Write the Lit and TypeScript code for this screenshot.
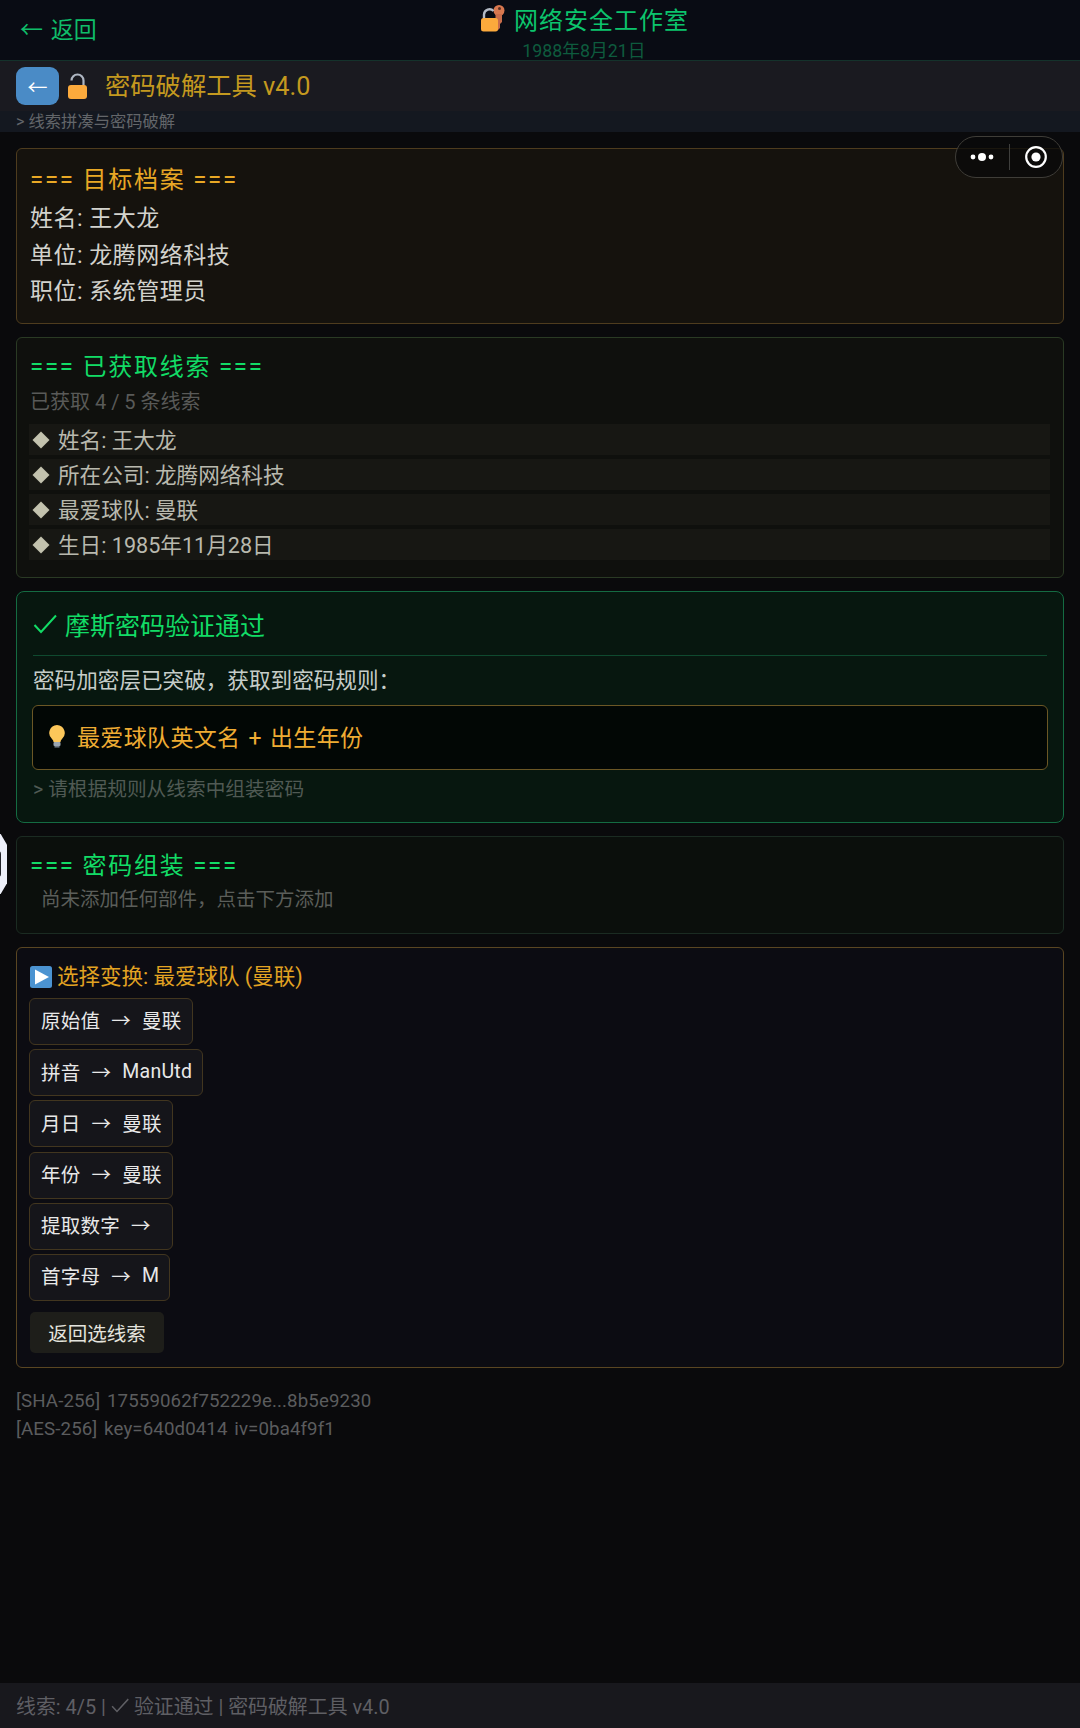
import { LitElement, html, css, svg } from "lit";
import { customElement } from "lit/decorators.js";

const clues = ["姓名: 王大龙", "所在公司: 龙腾网络科技", "最爱球队: 曼联", "生日: 1985年11月28日"];
const options: [string, string][] = [
  ["原始值", "曼联"],
  ["拼音", "ManUtd"],
  ["月日", "曼联"],
  ["年份", "曼联"],
  ["提取数字", ""],
  ["首字母", "M"],
];

const lockKey = svg`<svg width="26" height="28" viewBox="0 0 26 28">
  <circle cx="20" cy="6.500" r="5.500" fill="#d8784f"/><circle cx="20.500" cy="4.500" r="1.500" fill="#5a2f22"/>
  <path d="M16.500 10h6.500v8l-2 2v4l-2 2h-2.500z" fill="#c96d4a"/>
  <path d="M5 15V10.500a5.500 5.500 0 0 1 9.500 -3.500" fill="none" stroke="#b4bbc6" stroke-width="2.400"/>
  <rect x="2" y="14" width="17" height="13.500" rx="2.500" fill="#fcaa3c"/></svg>`;
const openLock = svg`<svg width="21" height="28" viewBox="0 0 21 28">
  <path d="M4.500 8.500a6 6 0 0 1 12 0V15" fill="none" stroke="#aeb6c2" stroke-width="2.200"/>
  <rect x="1" y="13" width="19" height="14" rx="3" fill="#fcaa3c"/></svg>`;
const bulb = svg`<svg width="18" height="24" viewBox="0 0 18 24">
  <path d="M9 1a8 8 0 0 0-5 14c1 1 1.500 2 1.500 3h7c0-1 .5-2 1.500-3A8 8 0 0 0 9 1z" fill="#fcc75a"/>
  <rect x="5.500" y="18" width="7" height="4" rx="1" fill="#9aa6b2"/><rect x="6.500" y="22" width="5" height="1.600" fill="#6c7884"/></svg>`;
const play = svg`<svg width="22" height="22" viewBox="0 0 22 22">
  <rect width="22" height="22" rx="2.500" fill="#4b93d1"/><path d="M5 3.500 19 11 5 18.500z" fill="#fff"/></svg>`;
const check = svg`<svg width="24" height="20" viewBox="0 0 24 20"><path d="M1.500 11 8 18 23 1.500" fill="none" stroke="currentColor" stroke-width="2"/></svg>`;
const checkSmall = svg`<svg width="18" height="15" viewBox="0 0 24 20"><path d="M1.500 11 8 18 23 1.500" fill="none" stroke="currentColor" stroke-width="2"/></svg>`;

@customElement("app-root")
export class AppRoot extends LitElement {
  static styles = css`
    :host {
      display: flex;
      flex-direction: column;
      position: relative;
      width: 1080px;
      height: 1728px;
      overflow: hidden;
      background: #0a0a0c;
      font-family: Roboto, "Noto Sans CJK SC", sans-serif;
      color: #c9c9c2;
    }
    .nav {
      height: 61px;
      box-sizing: border-box;
      display: flex;
      align-items: flex-start;
      background: #090c14;
      border-bottom: 1px solid #14322b;
      padding: 0 20px;
      flex: none;
    }
    .nav-back {
      width: 88px;
      flex: none;
      font-size: 23px;
      line-height: 30px;
      padding-top: 16px;
      word-spacing: 2px;
      color: #0fbd6a;
    }
    .nav-center { flex: 1; display: flex; flex-direction: column; align-items: center; }
    .nav-title {
      display: flex;
      align-items: center;
      gap: 9px;
      height: 34px;
      margin-top: 1px;
      font-size: 24px;
      letter-spacing: 1px;
      color: #0cc46d;
    }
    .nav-date { font-size: 17.800px; line-height: 24px; margin-top: 4px; color: #0e5b3e; }
    .toolbar {
      height: 50px;
      flex: none;
      display: flex;
      align-items: center;
      gap: 8px;
      padding: 0 16px;
      background: #1a1a20;
    }
    .back-btn {
      width: 43px;
      height: 38px;
      border-radius: 9px;
      background: #4a8bc6;
      color: #fff;
      font-size: 20px;
      display: flex;
      align-items: center;
      justify-content: center;
    }
    .toolbar-title { margin-left: 9px; padding-bottom: 4px; font-size: 25.300px; color: #c4991f; }
    .subbar {
      height: 21px;
      flex: none;
      padding: 0 16px;
      background: #141820;
      font-size: 16.300px;
      line-height: 21px;
      color: #63666a;
    }
    .main {
      padding: 16px 16px 0 16px;
      display: flex;
      flex-direction: column;
      gap: 13px;
    }
    .card { border: 1.500px solid #2a3a24; border-radius: 6px; box-sizing: border-box; }
    .target { height: 176px; padding: 14px 13px; background: #15120d; border-color: #4e3c1e; }
    .target .h { color: #e9a825; margin-bottom: 3px; }
    .h { font-size: 24px; line-height: 35px; letter-spacing: 1.750px; margin-bottom: 2px; }
    .green { color: #12dc66; }
    .line { font-size: 23px; line-height: 36.500px; letter-spacing: 0.500px; color: #d3d3cd; }
    .clues { height: 241px; padding: 12px 0 12px 13px; background: #0f100d; }
    .count { font-size: 20px; line-height: 31px; color: #595a58; margin-bottom: 6px; }
    .clue {
      height: 31px;
      box-sizing: border-box;
      margin-bottom: 4px;
      display: flex;
      align-items: center;
      gap: 8px;
      padding: 0 0 2px 3px;
      margin-left: -1px;
      margin-right: 13px;
      background: #171713;
      font-size: 21.600px;
      color: #b9b9ae;
    }
    .diamond { width: 12px; height: 12px; margin: 2px 3px 0; background: #c3c2ae; transform: rotate(45deg); flex: none; }
    .verify { height: 232px; padding: 0 16px; background: #07170f; border-color: #146b42; border-radius: 8px; }
    .verify-h {
      height: 64px;
      box-sizing: border-box;
      display: flex;
      align-items: center;
      gap: 8px;
      font-size: 25px;
      color: #12dc66;
      border-bottom: 1.500px solid #0f4a2f;
    }
    .verify-text { font-size: 21.600px; line-height: 30px; margin-top: 10px; color: #c6cdc9; }
    .rule {
      height: 65px;
      box-sizing: border-box;
      margin: 9px -1px 0;
      display: flex;
      align-items: center;
      gap: 11px;
      padding: 0 0 4px 15px;
      background: #020705;
      border: 1.500px solid #6b5725;
      border-radius: 6px;
      font-size: 23px;
      letter-spacing: 0.350px;
      word-spacing: 2px;
      color: #efac33;
    }
    .hint { font-size: 19.700px; line-height: 30px; margin-top: 5px; color: #505a54; }
    .assemble { height: 98px; padding: 12px 13px; background: #0b0f0c; border-color: #1b2b22; }
    .assemble .h { margin-bottom: 1px; }
    .empty { font-size: 19.500px; line-height: 30px; padding-left: 11px; margin-top: 1px; color: #5b5e5a; }
    .picker {
      height: 421px;
      padding: 14px 12px;
      background: #0c0c12;
      border-color: #5a4622;
      display: flex;
      flex-direction: column;
      align-items: flex-start;
    }
    .picker-h {
      display: flex;
      align-items: center;
      gap: 5px;
      height: 30px;
      margin-left: 1px;
      font-size: 21.500px;
      color: #e2a322;
      margin-bottom: 6px;
    }
    .picker-h span { padding-bottom: 6px; }
    .opt {
      height: 47px;
      box-sizing: border-box;
      display: flex;
      align-items: center;
      gap: 11px;
      padding: 0 10px 3px 11px;
      margin-bottom: 4.200px;
      background: #15151a;
      border: 1.500px solid #42361f;
      border-radius: 6px;
      font-size: 19.500px;
      letter-spacing: 0.250px;
      color: #e8e8e8;
      white-space: nowrap;
    }
    .return {
      margin: 7px 0 0 1px;
      height: 41px;
      width: 134px;
      display: flex;
      align-items: center;
      justify-content: center;
      background: #1e1e1a;
      border-radius: 5px;
      font-size: 19.500px;
      color: #e4e4de;
    }
    .hash { padding: 19px 16px 0; font-size: 18.700px; line-height: 28px; letter-spacing: 0.100px; word-spacing: 2px; color: #5b5c5e; }
    .footer {
      margin-top: auto;
      height: 44px;
      flex: none;
      display: flex;
      align-items: center;
      gap: 5px;
      padding: 0 16px 1px;
      background: #18181d;
      font-size: 19.900px;
      color: #5f5f64;
    }
    .capsule {
      position: absolute;
      left: 955px;
      top: 136px;
      width: 108px;
      height: 42px;
      box-sizing: border-box;
      display: flex;
      align-items: center;
      background: rgba(10, 10, 10, 0.75);
      border: 1.500px solid #3f3d38;
      border-radius: 21px;
    }
    .capsule-side { flex: 1; display: flex; justify-content: center; align-items: center; }
    .capsule-line { width: 1px; height: 26px; background: #3f3f3d; }
    .float {
      position: absolute;
      left: -14px;
      top: 834px;
      width: 21px;
      height: 60px;
      background: #eef0fa;
      clip-path: polygon(30% 0, 70% 0, 100% 18%, 100% 82%, 70% 100%, 30% 100%, 0 82%, 0 18%);
    }
    .float-in { position: absolute; left: 4px; top: 17px; width: 11px; height: 26px; box-sizing: border-box; border: 2px solid #24242a; border-radius: 3px; }
  `;

  render() {
    return html`
      <div class="nav">
        <div class="nav-back">← 返回</div>
        <div class="nav-center">
          <div class="nav-title">${lockKey}<span>网络安全工作室</span></div>
          <div class="nav-date">1988年8月21日</div>
        </div>
      </div>
      <div class="toolbar">
        <div class="back-btn">←</div>
        ${openLock}
        <div class="toolbar-title">密码破解工具 v4.0</div>
      </div>
      <div class="subbar">&gt; 线索拼凑与密码破解</div>
      <div class="main">
        <div class="card target">
          <div class="h">=== 目标档案 ===</div>
          <div class="line">姓名: 王大龙</div>
          <div class="line">单位: 龙腾网络科技</div>
          <div class="line">职位: 系统管理员</div>
        </div>
        <div class="card clues">
          <div class="h green">=== 已获取线索 ===</div>
          <div class="count">已获取 4 / 5 条线索</div>
          ${clues.map((c) => html`<div class="clue"><span class="diamond"></span><span>${c}</span></div>`)}
        </div>
        <div class="card verify">
          <div class="verify-h">${check}<span>摩斯密码验证通过</span></div>
          <div class="verify-text">密码加密层已突破，获取到密码规则：</div>
          <div class="rule">${bulb}<span>最爱球队英文名 + 出生年份</span></div>
          <div class="hint">&gt; 请根据规则从线索中组装密码</div>
        </div>
        <div class="card assemble">
          <div class="h green">=== 密码组装 ===</div>
          <div class="empty">尚未添加任何部件，点击下方添加</div>
        </div>
        <div class="card picker">
          <div class="picker-h">${play}<span>选择变换: 最爱球队 (曼联)</span></div>
          ${options.map(
            ([a, b]) => html`<div class="opt"><span>${a}</span><span>→</span><span>${b}</span></div>`
          )}
          <div class="return">返回选线索</div>
        </div>
      </div>
      <div class="hash">
        <div>[SHA-256] 17559062f752229e...8b5e9230</div>
        <div>[AES-256] key=640d0414 iv=0ba4f9f1</div>
      </div>
      <div class="footer"><span>线索: 4/5 |</span>${checkSmall}<span>验证通过 | 密码破解工具 v4.0</span></div>
      <div class="capsule">
        <div class="capsule-side">
          <svg width="24" height="10" viewBox="0 0 24 10"><circle cx="3" cy="5" r="2.400" fill="#fff"/><circle cx="12" cy="5" r="4" fill="#fff"/><circle cx="21" cy="5" r="2.400" fill="#fff"/></svg>
        </div>
        <div class="capsule-line"></div>
        <div class="capsule-side">
          <svg width="24" height="24" viewBox="0 0 24 24"><circle cx="12" cy="12" r="9.800" fill="none" stroke="#fff" stroke-width="2.200"/><circle cx="12" cy="12" r="4.600" fill="#fff"/></svg>
        </div>
      </div>
      <div class="float"><div class="float-in"></div></div>
    `;
  }
}
